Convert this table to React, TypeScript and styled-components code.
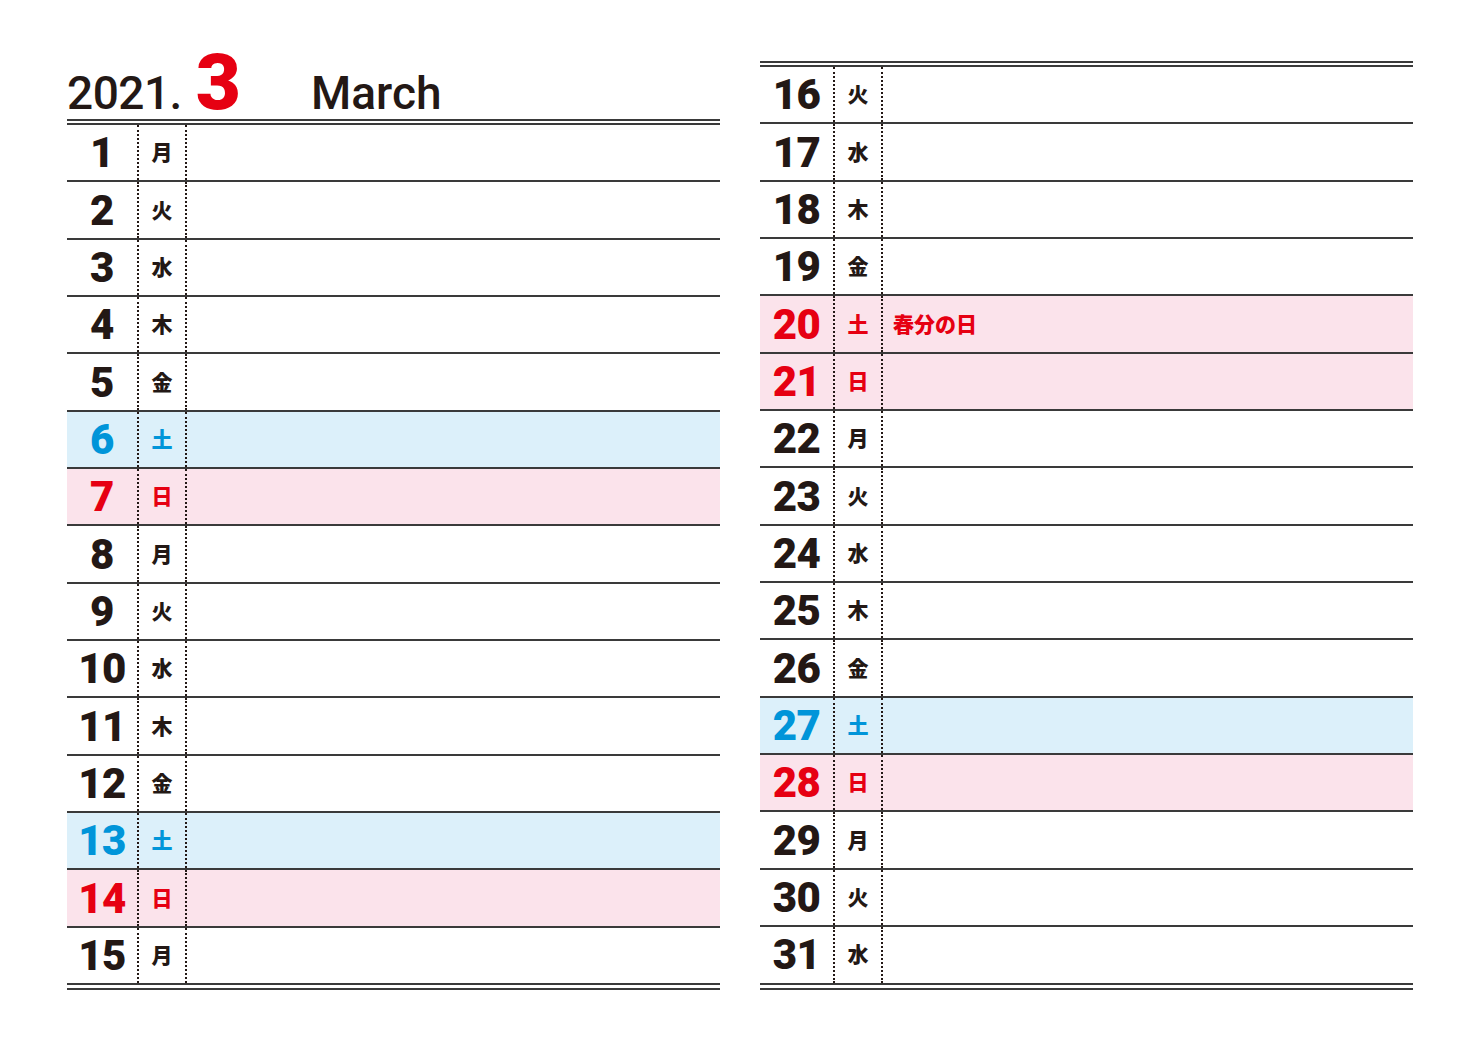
import styled, { createGlobalStyle } from 'styled-components';

const INK = '#231815';
const RED = '#e60012';
const BLUE = '#0095d9';
const RULE = '#3a3a3a';

const WEEK = ['日', '月', '火', '水', '木', '金', '土'];
const HOLIDAYS: Record<number, string> = { 20: '春分の日' };

type Day = { day: number; week: number; holiday?: string };

const days: Day[] = Array.from({ length: 31 }, (_, i) => {
  const day = i + 1;
  return { day, week: new Date(2021, 2, day).getDay(), holiday: HOLIDAYS[day] };
});

type Tone = 'plain' | 'sat' | 'sun';

function toneOf(d: Day): Tone {
  if (d.week === 0 || d.holiday) return 'sun';
  if (d.week === 6) return 'sat';
  return 'plain';
}

function App() {
  return (
    <>
      <GlobalStyle />
      <Page>
        <Panel>
          <Header>
            <Year>2021.</Year>
            <MonthNum>3</MonthNum>
            <MonthName>March</MonthName>
          </Header>
          <DayTable days={days.slice(0, 15)} numWidth={70} />
        </Panel>
        <Panel $top={61}>
          <DayTable days={days.slice(15)} numWidth={73} />
        </Panel>
      </Page>
    </>
  );
}

function DayTable({ days, numWidth }: { days: Day[]; numWidth: number }) {
  return (
    <Table>
      <DoubleRule />
      {days.map((d) => {
        const tone = toneOf(d);
        return (
          <Row key={d.day} $tone={tone}>
            <NumCell $width={numWidth} $tone={tone}>
              {d.day}
            </NumCell>
            <WeekCell $tone={tone}>{WEEK[d.week]}</WeekCell>
            <NoteCell>{d.holiday}</NoteCell>
          </Row>
        );
      })}
      <BottomRule />
    </Table>
  );
}

export default App;

const GlobalStyle = createGlobalStyle`
  html, body {
    margin: 0;
    padding: 0;
    background: #fff;
  }
  body {
    font-family: Roboto, 'Liberation Sans', 'Noto Sans CJK JP', sans-serif;
    color: ${INK};
  }
`;

const Page = styled.div`
  display: flex;
  align-items: flex-start;
  gap: 40px;
  width: 1480px;
  height: 1047px;
  padding-left: 67px;
  box-sizing: border-box;
`;

const Panel = styled.div<{ $top?: number }>`
  width: 653px;
  padding-top: ${(p) => p.$top ?? 0}px;
  display: flex;
  flex-direction: column;
`;

const Header = styled.div`
  height: 119px;
  box-sizing: border-box;
  padding-top: 44px;
  display: flex;
  align-items: baseline;
  line-height: 1;
`;

const Year = styled.span`
  font-family: Roboto, 'Liberation Sans', sans-serif;
  font-weight: 500;
  font-size: 46px;
  letter-spacing: -0.5px;
`;

const MonthNum = styled.span`
  font-family: Roboto, 'Liberation Sans', sans-serif;
  font-weight: 900;
  font-size: 78px;
  color: ${RED};
  margin-left: 14px;
`;

const MonthName = styled.span`
  font-family: Roboto, 'Liberation Sans', sans-serif;
  font-weight: 500;
  font-size: 46px;
  margin-left: 70px;
`;

const Table = styled.div`
  display: flex;
  flex-direction: column;
`;

const DoubleRule = styled.div`
  border-top: 6px double ${RULE};
`;

const BottomRule = styled.div`
  margin-top: 3px;
  border-top: 2px solid ${RULE};
`;

const Row = styled.div<{ $tone: Tone }>`
  display: flex;
  height: 57.35px;
  box-sizing: border-box;
  border-bottom: 2px solid ${RULE};
  background: ${(p) => (p.$tone === 'sun' ? '#fbe3eb' : p.$tone === 'sat' ? '#dcf0fa' : '#fff')};
`;

const toneColor = (t: Tone) => (t === 'sun' ? RED : t === 'sat' ? BLUE : INK);

const NumCell = styled.div<{ $width: number; $tone: Tone }>`
  width: ${(p) => p.$width}px;
  flex: none;
  display: flex;
  align-items: center;
  justify-content: center;
  font-family: Roboto, 'Liberation Sans', sans-serif;
  font-weight: 900;
  font-size: 42px;
  letter-spacing: -0.5px;
  color: ${(p) => toneColor(p.$tone)};
  border-right: 2px dotted ${INK};
`;

const WeekCell = styled.div<{ $tone: Tone }>`
  width: 46px;
  flex: none;
  display: flex;
  align-items: center;
  justify-content: center;
  padding-bottom: 3px;
  font-family: 'Noto Sans CJK JP', sans-serif;
  font-weight: 900;
  font-size: 21px;
  color: ${(p) => toneColor(p.$tone)};
  border-right: 2px dotted ${INK};
`;

const NoteCell = styled.div`
  flex: 1;
  display: flex;
  align-items: center;
  padding-left: 10px;
  padding-bottom: 3px;
  font-family: 'Noto Sans CJK JP', sans-serif;
  font-weight: 900;
  font-size: 21px;
  color: ${RED};
`;
